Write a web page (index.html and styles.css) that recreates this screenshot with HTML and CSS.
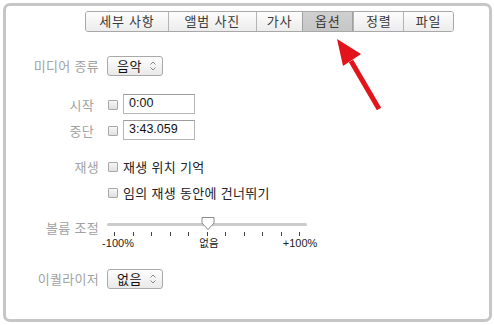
FILE: index.html
```html
<!DOCTYPE html>
<html lang="ko">
<head>
<meta charset="utf-8">
<link rel="stylesheet" href="styles.css">
</head>
<body>
<div class="frame">
  <div class="tabs">
    <div class="tab t1">세부 사항</div>
    <div class="tab t2">앨범 사진</div>
    <div class="tab t3">가사</div>
    <div class="tab t4 active">옵션</div>
    <div class="tab t5">정렬</div>
    <div class="tab t6">파일</div>
  </div>

  <div class="row r-media">
    <div class="label">미디어 종류</div>
    <div class="popup"><span>음악</span>
      <svg class="chev" width="8" height="12" viewBox="0 0 8 12"><path d="M1.5 4.5 L4 2 L6.5 4.5 M1.5 7.5 L4 10 L6.5 7.5" fill="none" stroke="#888" stroke-width="1"/></svg>
    </div>
  </div>

  <div class="row r-start">
    <div class="label lab-time">시작</div>
    <div class="ctl"><span class="cb"></span><div class="field">0:00</div></div>
  </div>
  <div class="row r-stop">
    <div class="label lab-time">중단</div>
    <div class="ctl"><span class="cb"></span><div class="field">3:43.059</div></div>
  </div>

  <div class="row r-play1">
    <div class="label">재생</div>
    <div class="ctl"><span class="cb"></span><span class="opt">재생 위치 기억</span></div>
  </div>
  <div class="row r-play2">
    <div class="label"></div>
    <div class="ctl"><span class="cb"></span><span class="opt">임의 재생 동안에 건너뛰기</span></div>
  </div>

  <div class="row r-vol">
    <div class="label lab-vol">볼륨 조절</div>
    <div class="slider">
      <div class="track"></div>
      <svg class="thumb" width="14" height="15" viewBox="0 0 14 15"><path d="M1 1.5 H13 V7 L7 13.5 L1 7 Z" fill="#fff" stroke="#8a8a8a" stroke-width="1"/></svg>
      <div class="ticks">
        <i></i><i></i><i></i><i></i><i></i><i></i><i></i><i></i><i></i><i></i><i></i>
      </div>
      <div class="scale">
        <span><b>-100%</b></span><span><b class="kr">없음</b></span><span><b>+100%</b></span>
      </div>
    </div>
  </div>

  <div class="row r-eq">
    <div class="label">이퀄라이저</div>
    <div class="popup"><span>없음</span>
      <svg class="chev" width="8" height="12" viewBox="0 0 8 12"><path d="M1.5 4.5 L4 2 L6.5 4.5 M1.5 7.5 L4 10 L6.5 7.5" fill="none" stroke="#888" stroke-width="1"/></svg>
    </div>
  </div>

  <svg class="arrow" width="60" height="80" viewBox="0 0 60 80">
    <line x1="50" y1="75" x2="22" y2="27" stroke="#e3131b" stroke-width="5" stroke-linecap="butt"/>
    <path d="M8 5 L32 20 L14 32 Z" fill="#e3131b"/>
  </svg>
</div>
</body>
</html>
```

FILE: styles.css
```css
html, body {
  margin: 0;
  padding: 0;
  background: #fff;
}
body {
  width: 494px;
  height: 325px;
  overflow: hidden;
  font-family: "Noto Sans CJK KR", "Noto Sans", sans-serif;
  font-size: 13px;
}
.frame {
  position: relative;
  box-sizing: border-box;
  margin: 3px 0 0 3px;
  width: 489px;
  height: 319px;
  border: 3px solid #c6c6c6;
  border-radius: 7px;
  display: flex;
  flex-direction: column;
}
.tabs {
  display: flex;
  margin: 5px 0 0 79px;
  height: 21px;
  box-sizing: border-box;
  border: 1px solid #a8a8a8;
  border-radius: 3px;
  width: 369px;
  overflow: hidden;
}
.tab {
  box-sizing: border-box;
  height: 19px;
  line-height: 18px;
  text-align: center;
  color: #3a3a3a;
  background: linear-gradient(#fdfdfd, #ececec);
  border-left: 1px solid #b4b4b4;
  letter-spacing: 0.8px;
}
.tab.t1 { border-left: none; width: 82px; }
.t2 { width: 88px; }
.t3 { width: 47px; }
.t4 { width: 51px; }
.t5 { width: 50px; }
.t6 { width: 50px; }
.tab.active {
  background: linear-gradient(#d0d0d0, #c6c6c6);
  border-right: 1px solid #a0a0a0;
  border-left: 1px solid #a0a0a0;
}
.row {
  display: grid;
  grid-template-columns: 93px auto;
  column-gap: 8px;
  align-items: center;
}
.label {
  text-align: right;
  color: #a2a2a2;
  line-height: 18px;
  white-space: nowrap;
  letter-spacing: 0.3px;
}
.lab-time { padding-right: 5px; padding-top: 3px; }
.lab-vol { align-self: start; padding-top: 3px; }
.r-media { margin-top: 24px; height: 20px; }
.r-start { margin-top: 17px; height: 20px; }
.r-stop { margin-top: 6px; height: 20px; }
.r-play1 { margin-top: 19px; height: 18px; }
.r-play2 { margin-top: 8px; height: 18px; }
.r-vol { margin-top: 14px; height: 34px; align-items: start; }
.r-eq { margin-top: 19px; height: 20px; }

.popup {
  box-sizing: border-box;
  width: 56px;
  height: 20px;
  border: 1px solid #a9a9a9;
  border-radius: 3px;
  background: linear-gradient(#fefefe, #e9e9e9);
  display: flex;
  align-items: center;
  padding-left: 9px;
  color: #111;
  line-height: 18px;
  letter-spacing: 0.5px;
}
.popup .chev { margin-left: auto; margin-right: 5px; }
.ctl {
  display: flex;
  align-items: center;
}
.cb {
  box-sizing: border-box;
  width: 10px;
  height: 10px;
  border: 1px solid #a8a8a8;
  border-radius: 1px;
  background: linear-gradient(#f6f6f6, #e0e0e0);
  margin-left: 1px;
  flex: none;
}
.r-start .cb, .r-stop .cb { margin-top: 3px; }
.field {
  box-sizing: border-box;
  width: 72px;
  height: 20px;
  margin-left: 5px;
  border: 1px solid #b5b5b5;
  border-top-color: #9c9c9c;
  background: #fff;
  font-family: "Liberation Sans", Arial, sans-serif;
  font-size: 12.5px;
  line-height: 16px;
  padding-left: 5px;
  color: #111;
}
.opt {
  margin-left: 5px;
  color: #222;
  line-height: 18px;
  white-space: nowrap;
  letter-spacing: 0.3px;
}
.slider {
  position: relative;
  width: 200px;
  height: 34px;
}
.track {
  margin-top: 7px;
  height: 3px;
  background: #cbcbcb;
  border-radius: 2px;
}
.thumb {
  position: absolute;
  left: 94px;
  top: 0;
}
.ticks {
  display: flex;
  justify-content: space-between;
  padding: 0 7px;
  margin-top: 6px;
  height: 4px;
}
.ticks i {
  display: block;
  width: 1px;
  height: 4px;
  background: #444;
}
.scale {
  display: flex;
  justify-content: space-between;
  padding: 0 7px 0 11px;
  margin-top: 1px;
}
.scale span {
  width: 0;
  display: flex;
  justify-content: center;
}
.scale b {
  font-weight: normal;
  font-family: "Liberation Sans", Arial, sans-serif;
  font-size: 11px;
  line-height: 12px;
  color: #222;
  white-space: nowrap;
}
.scale b.kr {
  font-family: "Noto Sans CJK KR", sans-serif;
  font-size: 10.5px;
}
.arrow {
  position: absolute;
  left: 323px;
  top: 28px;
}
```
